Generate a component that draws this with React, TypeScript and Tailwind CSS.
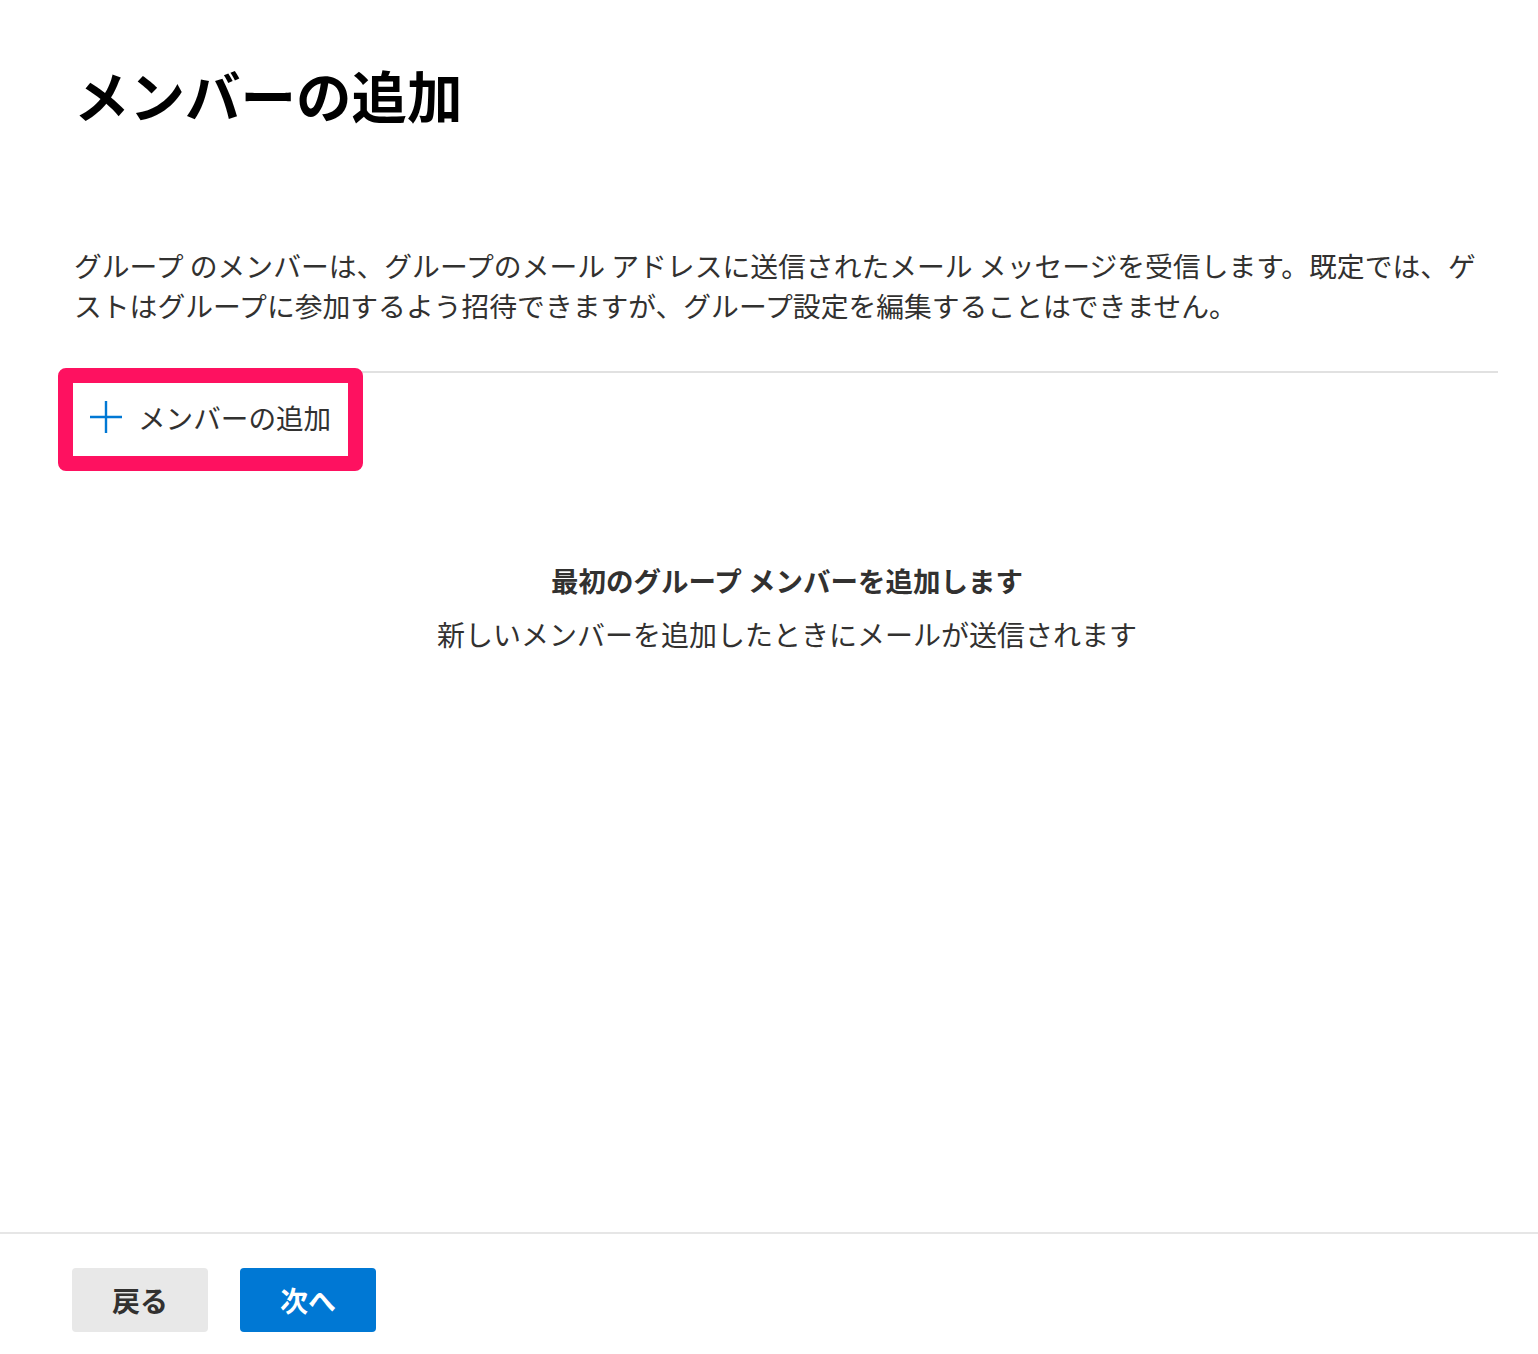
import React from "react";

const font = { fontFamily: '"Noto Sans CJK JP", "Noto Sans", sans-serif' };

export default function App() {
  return (
    <div className="min-h-[1354px] flex flex-col bg-white text-[#323130]" style={font}>
      <main className="flex-1 pl-[76px] pr-[40px]">
        <h1 className="pt-[58px] text-[55.5px] leading-[72px] font-bold text-black ml-[-2px]">
          メンバーの追加
        </h1>
        <p className="mt-[115px] text-[27.8px] leading-[40px] text-[#323130] ml-[-2px]">
          グループ のメンバーは、グループのメール アドレスに送信されたメール メッセージを受信します。既定では、ゲストはグループに参加するよう招待できますが、グループ設定を編集することはできません。
        </p>
        <div className="mt-[46px] h-[2px] bg-[#e1e1e1]" />
        <div className="h-[88px] flex items-center">
          <div className="relative">
            <button className="flex items-center gap-[16px] pl-[14px] pr-[10px] h-[60px] text-[27.6px] text-[#323130]">
              <svg width="32" height="32" viewBox="0 0 32 32" className="shrink-0">
                <path d="M16 0V32M0 16H32" stroke="#0078d4" strokeWidth="2.4" fill="none" />
              </svg>
              <span className="leading-[40px]">メンバーの追加</span>
            </button>
            <div className="absolute left-[-18px] top-[-19px] w-[305px] h-[103px] border-[15px] border-[#fe1160] rounded-[8px] pointer-events-none" />
          </div>
        </div>
        <div className="mt-[99px] flex flex-col items-center">
          <div className="text-[27.5px] leading-[40px] font-bold text-[#323130]">
            最初のグループ メンバーを追加します
          </div>
          <div className="mt-[14px] text-[28px] leading-[40px] text-[#323130]">
            新しいメンバーを追加したときにメールが送信されます
          </div>
        </div>
      </main>
      <footer className="border-t-[2px] border-[#e6e6e6] pt-[34px] pb-[22px] pl-[72px] flex gap-[32px]">
        <button className="w-[136px] h-[64px] rounded-[4px] bg-[#e8e8e8] text-[28px] font-bold text-[#323130]">
          戻る
        </button>
        <button className="w-[136px] h-[64px] rounded-[4px] bg-[#0078d4] text-[28px] font-bold text-white">
          次へ
        </button>
      </footer>
    </div>
  );
}
